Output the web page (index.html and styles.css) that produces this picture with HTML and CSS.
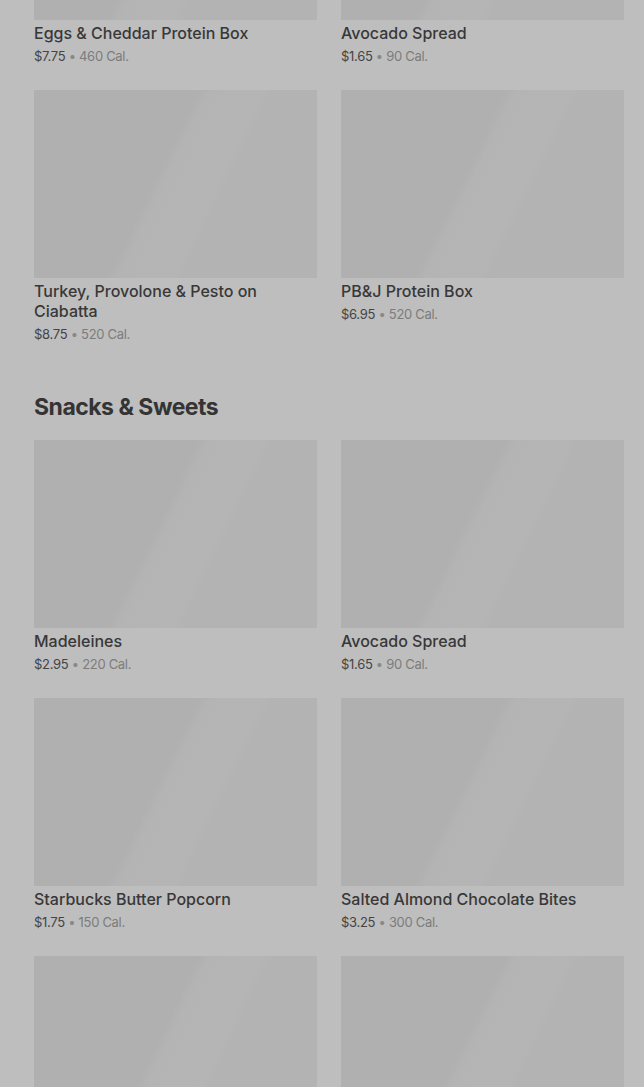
FILE: index.html
```html
<!DOCTYPE html>
<html lang="en">
<head>
<meta charset="utf-8">
<title>Menu</title>
<link rel="stylesheet" href="styles.css">
</head>
<body>
<main class="page">
  <section class="section">
    <div class="grid">
      <article class="card"><div class="thumb"></div><h3 class="name">Eggs &amp; Cheddar Protein Box</h3><p class="meta"><span class="price">$7.75</span> • <span class="cal">460 Cal.</span></p></article>
      <article class="card"><div class="thumb"></div><h3 class="name">Avocado Spread</h3><p class="meta"><span class="price">$1.65</span> • <span class="cal">90 Cal.</span></p></article>
      <article class="card"><div class="thumb"></div><h3 class="name">Turkey, Provolone &amp; Pesto on Ciabatta</h3><p class="meta"><span class="price">$8.75</span> • <span class="cal">520 Cal.</span></p></article>
      <article class="card"><div class="thumb"></div><h3 class="name">PB&amp;J Protein Box</h3><p class="meta"><span class="price">$6.95</span> • <span class="cal">520 Cal.</span></p></article>
    </div>
  </section>
  <section class="section">
    <h2 class="section-title">Snacks &amp; Sweets</h2>
    <div class="grid">
      <article class="card"><div class="thumb"></div><h3 class="name">Madeleines</h3><p class="meta"><span class="price">$2.95</span> • <span class="cal">220 Cal.</span></p></article>
      <article class="card"><div class="thumb"></div><h3 class="name">Avocado Spread</h3><p class="meta"><span class="price">$1.65</span> • <span class="cal">90 Cal.</span></p></article>
      <article class="card"><div class="thumb"></div><h3 class="name">Starbucks Butter Popcorn</h3><p class="meta"><span class="price">$1.75</span> • <span class="cal">150 Cal.</span></p></article>
      <article class="card"><div class="thumb"></div><h3 class="name">Salted Almond Chocolate Bites</h3><p class="meta"><span class="price">$3.25</span> • <span class="cal">300 Cal.</span></p></article>
      <article class="card"><div class="thumb"></div></article>
      <article class="card"><div class="thumb"></div></article>
    </div>
  </section>
</main>
</body>
</html>
```

FILE: styles.css
```css
html, body {
  margin: 0;
  padding: 0;
  background: #bebebe;
  overflow: hidden;
}

.page {
  margin-top: -168px;
  padding: 0 20px 0 34px;
  font-family: Inter, "Liberation Sans", sans-serif;
  color: #363636;
}

.section + .section {
  margin-top: 47px;
}

.section-title {
  margin: 0 0 17px;
  font-size: 23px;
  line-height: 32px;
  font-weight: 700;
  letter-spacing: -0.5px;
  color: #343434;
}

.grid {
  display: grid;
  grid-template-columns: 1fr 1fr;
  gap: 24px 24px;
}

.card {
  display: flex;
  flex-direction: column;
}

.thumb {
  height: 188px;
  background: linear-gradient(116deg, #b0b0b0 0%, #b0b0b0 44%, #b4b4b4 47%, #b5b5b5 61%, #b3b3b3 64%, #b3b3b3 100%);
}

.name {
  margin: 3px 0 0;
  font-size: 16px;
  line-height: 20px;
  font-weight: 500;
  color: #383838;
}

.meta {
  margin: 3px 0 0;
  font-size: 13px;
  line-height: 20px;
  letter-spacing: -0.3px;
  color: #888;
}

.price {
  color: #444;
}

.cal {
  color: #7c7c7c;
}
```
